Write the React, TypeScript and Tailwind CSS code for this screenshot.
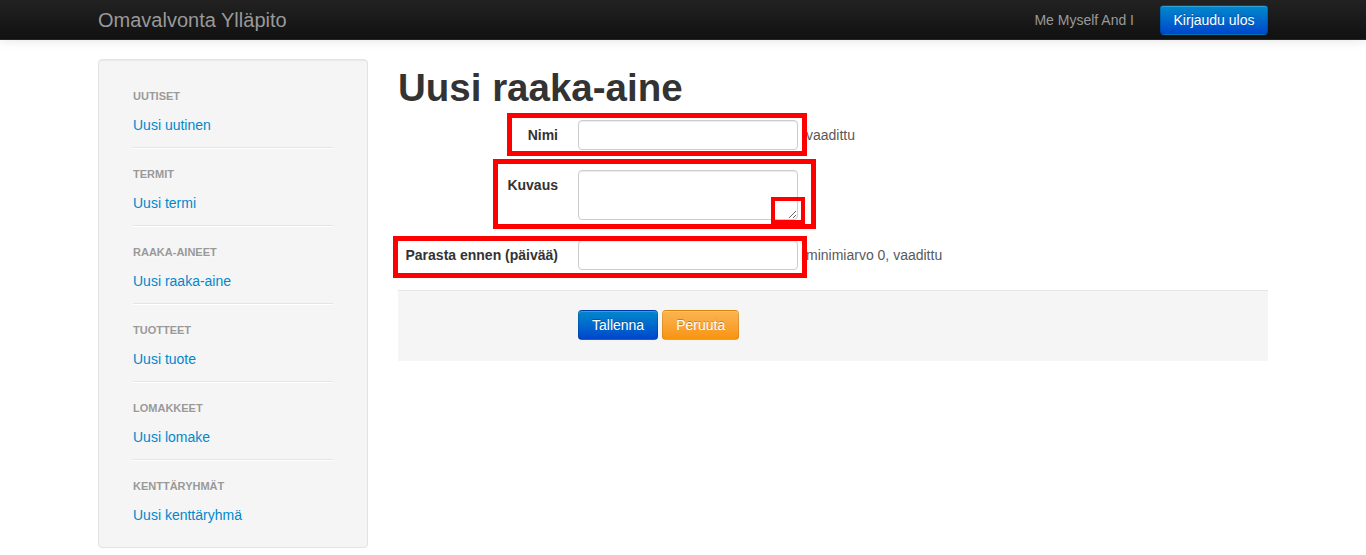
const sections = [
  { title: "Uutiset", link: "Uusi uutinen" },
  { title: "Termit", link: "Uusi termi" },
  { title: "Raaka-aineet", link: "Uusi raaka-aine" },
  { title: "Tuotteet", link: "Uusi tuote" },
  { title: "Lomakkeet", link: "Uusi lomake" },
  { title: "Kenttäryhmät", link: "Uusi kenttäryhmä" },
];

const inputCls =
  "block w-[220px] h-[30px] px-[6px] py-1 bg-white border border-[#cccccc] rounded-[4px] shadow-[inset_0_1px_1px_rgba(0,0,0,0.075)] outline-none";

function Navbar() {
  return (
    <div className="h-[40px] bg-gradient-to-b from-[#222222] to-[#111111] border-b border-[#252525] shadow-[0_1px_10px_rgba(0,0,0,0.1)] relative z-10">
      <div className="w-[1170px] mx-auto h-full flex items-center justify-between">
        <a className="text-[20px] leading-[20px] text-[#999999] font-light">Omavalvonta Ylläpito</a>
        <div className="flex items-center gap-[26px]">
          <span className="text-[14px] text-[#999999]">Me Myself And I</span>
          <button className="h-[30px] w-[108px] rounded-[4px] border border-[rgba(0,0,0,0.15)] bg-gradient-to-b from-[#0088cc] to-[#0044cc] text-white text-[14px] [text-shadow:0_-1px_0_rgba(0,0,0,0.25)] shadow-[inset_0_1px_0_rgba(255,255,255,0.2)]">
            Kirjaudu ulos
          </button>
        </div>
      </div>
    </div>
  );
}

function Sidebar() {
  return (
    <div className="w-[270px] bg-[#f5f5f5] border border-[#e3e3e3] rounded-[4px] shadow-[inset_0_1px_1px_rgba(0,0,0,0.05)] px-[34px] pt-[26px] pb-[22px]">
      {sections.map(({ title, link }, i) => (
        <div key={title}>
          {i > 0 && <div className="h-px bg-[#e5e5e5] border-b border-white box-content mt-[12px] mb-[15px]" />}
          <div className="text-[11px] leading-[20px] font-bold uppercase text-[#999999] [text-shadow:0_1px_0_rgba(255,255,255,0.5)]">
            {title}
          </div>
          <a className="block mt-[9px] text-[14px] leading-[20px] text-[#0088cc]">{link}</a>
        </div>
      ))}
    </div>
  );
}

function Field({ label, help, children }: { label: string; help?: string; children: React.ReactNode }) {
  return (
    <div className="flex items-start mb-[20px]">
      <label className="w-[160px] pt-[5px] text-right text-[14px] leading-[20px] font-bold text-[#333333]">{label}</label>
      <div className="ml-[20px] flex items-center">
        {children}
        {help && <span className="ml-[8px] text-[14px] leading-[20px] text-[#595959]">{help}</span>}
      </div>
    </div>
  );
}

export default function App() {
  return (
    <div className="relative min-h-[555px] bg-white text-[14px] leading-[20px] text-[#333333] font-['Liberation_Sans',Arial,sans-serif]">
      <Navbar />
      <div className="w-[1170px] mx-auto pt-[19px] flex gap-[30px]">
        <Sidebar />
        <div className="w-[870px]">
          <h1 className="mt-[9px] mb-[12px] text-[38.5px] leading-[40px] font-bold text-[#333333]">Uusi raaka-aine</h1>
          <Field label="Nimi" help="vaadittu">
            <input className={inputCls} />
          </Field>
          <Field label="Kuvaus">
            <textarea className="block w-[220px] h-[50px] px-[6px] py-1 bg-white border border-[#cccccc] rounded-[4px] shadow-[inset_0_1px_1px_rgba(0,0,0,0.075)] outline-none" />
          </Field>
          <Field label="Parasta ennen (päivää)" help="minimiarvo 0, vaadittu">
            <input className={inputCls} />
          </Field>
          <div className="bg-[#f5f5f5] border-t border-[#e5e5e5] pt-[19px] pb-[21px] pl-[180px] flex gap-[4px]">
            <button className="h-[30px] px-[13px] rounded-[4px] border border-[rgba(0,0,0,0.15)] bg-gradient-to-b from-[#0088cc] to-[#0044cc] text-white [text-shadow:0_-1px_0_rgba(0,0,0,0.25)] shadow-[inset_0_1px_0_rgba(255,255,255,0.2)]">
              Tallenna
            </button>
            <button className="h-[30px] px-[13px] rounded-[4px] border border-[rgba(0,0,0,0.1)] bg-gradient-to-b from-[#fbb450] to-[#f89406] text-white [text-shadow:0_-1px_0_rgba(0,0,0,0.25)] shadow-[inset_0_1px_0_rgba(255,255,255,0.2)]">
              Peruuta
            </button>
          </div>
        </div>
      </div>

      {/* red annotation boxes */}
      <div className="absolute left-[507px] top-[113px] w-[300px] h-[43px] border-[5px] border-[#ff0000] pointer-events-none" />
      <div className="absolute left-[493px] top-[159px] w-[323px] h-[70px] border-[5px] border-[#ff0000] pointer-events-none" />
      <div className="absolute left-[771px] top-[197px] w-[34px] h-[27px] border-[4px] border-[#ff0000] pointer-events-none" />
      <div className="absolute left-[393px] top-[236px] w-[414px] h-[42px] border-[5px] border-[#ff0000] pointer-events-none" />
    </div>
  );
}
